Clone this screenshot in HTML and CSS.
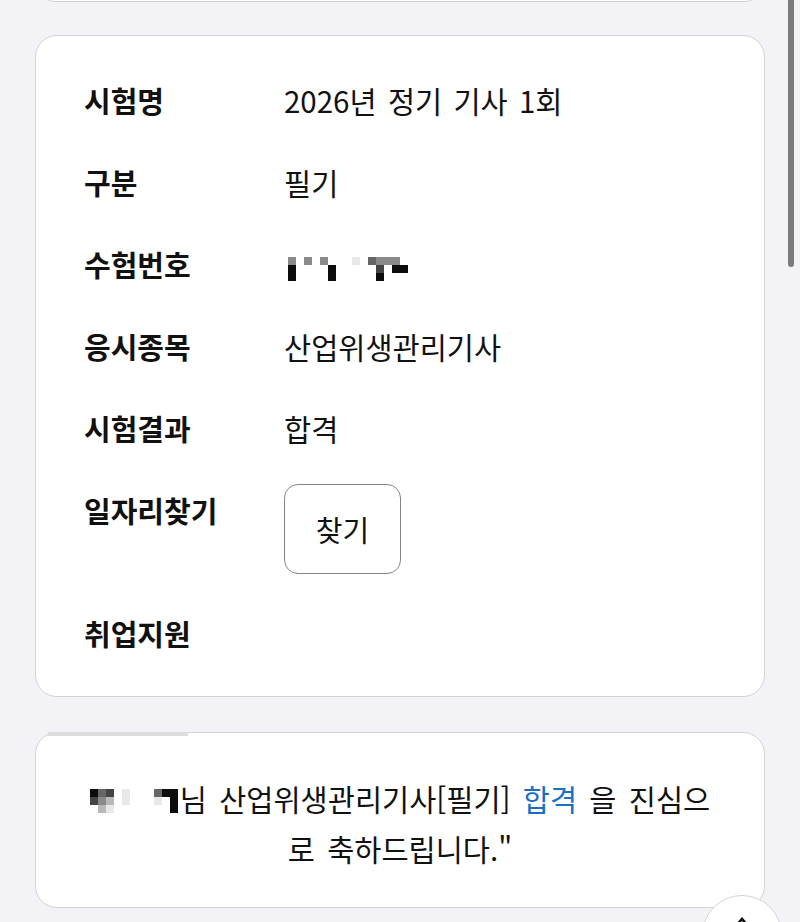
FILE: index.html
```html
<!DOCTYPE html>
<html lang="ko">
<head>
<meta charset="utf-8">
<title>합격 확인</title>
<link rel="stylesheet" href="styles.css">
</head>
<body>
<div class="page">
  <div class="card card-prev"></div>

  <div class="card card-info">
    <div class="row"><div class="label">시험명</div><div class="value">2026년 정기 기사 1회</div></div>
    <div class="row"><div class="label">구분</div><div class="value">필기</div></div>
    <div class="row"><div class="label">수험번호</div><div class="value">
      <span class="mosaic mosaic-num">
        <i class="g2"></i><i></i><i class="g2"></i><i></i><i class="g2"></i><i></i><i></i><i></i><i class="g0"></i><i></i><i class="g3"></i><i class="g2"></i><i class="g2"></i><i class="g2"></i><i></i><i></i>
        <i class="k"></i><i></i><i></i><i></i><i></i><i class="k"></i><i></i><i></i><i></i><i></i><i></i><i class="g4"></i><i></i><i class="k"></i><i class="k"></i><i></i>
        <i class="k"></i><i></i><i></i><i></i><i></i><i class="k"></i><i></i><i></i><i></i><i></i><i></i><i class="k"></i><i></i><i></i><i></i><i></i>
      </span>
    </div></div>
    <div class="row"><div class="label">응시종목</div><div class="value">산업위생관리기사</div></div>
    <div class="row"><div class="label">시험결과</div><div class="value">합격</div></div>
    <div class="row row-btn"><div class="label">일자리찾기</div><div class="value"><button class="find-btn" type="button">찾기</button></div></div>
    <div class="row"><div class="label">취업지원</div><div class="value"></div></div>
  </div>

  <div class="card card-msg">
    <span class="msg-strip"></span>
    <p class="msg"><span class="mosaic mosaic-name">
        <i class="k"></i><i class="g3"></i><i class="g4"></i><i></i><i class="g0"></i><i></i><i></i><i></i><i class="g3"></i><i class="k"></i><i class="k"></i>
        <i class="g4"></i><i class="g2"></i><i class="g1"></i><i></i><i class="g0"></i><i></i><i></i><i></i><i class="g0"></i><i></i><i class="k"></i>
        <i></i><i class="g1"></i><i class="g0"></i><i></i><i></i><i></i><i></i><i></i><i></i><i></i><i class="k"></i>
      </span>님 산업위생관리기사[필기] <span class="pass">합격</span> 을 진심으<br>로 축하드립니다."</p>
  </div>
</div>

<div class="scrollbar"></div>
<div class="to-top">
  <svg viewBox="0 0 20 20" width="20" height="20" aria-hidden="true"><path d="M10 3 L17 11 L13.5 11 L10 7 L6.5 11 L3 11 Z" fill="#111"/></svg>
</div>
</body>
</html>
```

FILE: styles.css
```css
* { box-sizing: border-box; }

html, body {
  margin: 0;
  padding: 0;
  background: #f2f2f7;
  height: 100%;
  overflow: hidden;
}

body {
  font-family: "Noto Sans CJK KR", "Noto Sans", sans-serif;
  color: #111;
}

.page {
  padding: 0 35px;
}

.card {
  background: #fff;
  border: 1px solid #d2d2d7;
  border-radius: 22px;
}

.card-prev {
  height: 42px;
  margin-top: -40px;
}

.card-info {
  margin-top: 33px;
  padding: 23px 48px 22px;
}

.row {
  display: flex;
  align-items: flex-start;
  padding: 24px 0;
  font-size: 29.5px;
  line-height: 34px;
}

.label {
  width: 200px;
  flex: none;
  font-weight: 700;
  font-size: 29px;
}

.value {
  font-weight: 400;
  word-spacing: 3px;
}

.row-btn {
  padding: 15px 0 18px;
}

.row-btn .label {
  margin-top: 9px;
}

.find-btn {
  width: 117px;
  height: 90px;
  border: 1.5px solid #858585;
  border-radius: 14px;
  background: #fff;
  font-family: inherit;
  font-size: 29px;
  color: #111;
  padding: 0;
}

.mosaic {
  display: inline-grid;
  grid-auto-rows: 8px;
  vertical-align: middle;
}

.mosaic i {
  display: block;
  background: transparent;
}

.mosaic-num {
  grid-template-columns: repeat(16, 8px);
  margin-left: 4px;
}

.mosaic-name {
  grid-template-columns: repeat(11, 8px);
  margin-right: 2px;
  position: relative;
  top: -2px;
}

.mosaic .k { background: #0c0c0c; }
.mosaic .g4 { background: #444; }
.mosaic .g3 { background: #666; }
.mosaic .g2 { background: #8a8a8a; }
.mosaic .g1 { background: #b8b8b8; }
.mosaic .g0 { background: #e8e8e8; }

.card-msg {
  position: relative;
  margin-top: 35px;
  padding: 40px 20px 34px;
}

.msg-strip {
  position: absolute;
  left: 12px;
  top: -1px;
  width: 140px;
  height: 4px;
  background: #dcdcdc;
}

.msg {
  margin: 0;
  text-align: center;
  font-size: 29.5px;
  line-height: 50px;
  word-spacing: 4px;
}

.pass {
  color: #1a6fc2;
}

.scrollbar {
  position: fixed;
  top: 0;
  left: 788px;
  width: 6px;
  height: 267px;
  background: #7c7c80;
  border-radius: 0 0 3px 3px;
}

.to-top {
  position: fixed;
  left: 702px;
  top: 895px;
  width: 80px;
  height: 80px;
  border-radius: 50%;
  background: #fff;
  border: 1px solid #d2d2d7;
  display: flex;
  justify-content: center;
  padding-top: 18px;
}

.to-top svg {
  display: block;
}
```
